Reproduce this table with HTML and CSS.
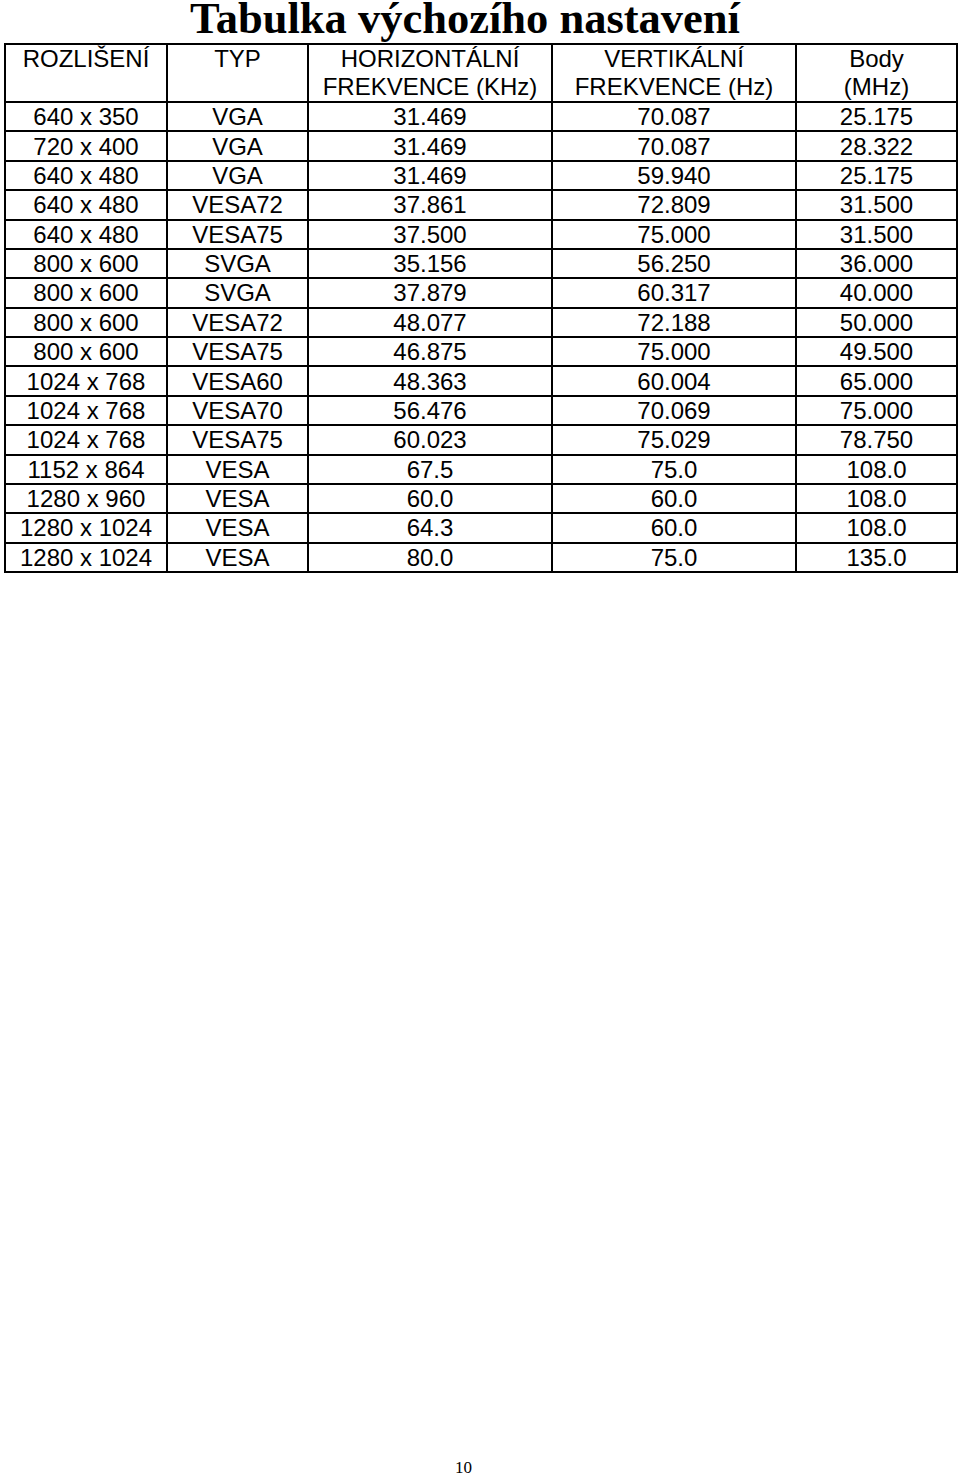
FILE: index.html
```html
<!DOCTYPE html>
<html lang="cs">
<head>
<meta charset="utf-8">
<title>Tabulka výchozího nastavení</title>
<link rel="stylesheet" href="styles.css">
</head>
<body>
<div class="page">
  <h1 class="title">Tabulka výchozího nastavení</h1>
  <table class="modes">
    <colgroup>
      <col class="c1"><col class="c2"><col class="c3"><col class="c4"><col class="c5">
    </colgroup>
    <thead>
      <tr>
        <th>ROZLIŠENÍ</th>
        <th>TYP</th>
        <th>HORIZONTÁLNÍ<br>FREKVENCE (KHz)</th>
        <th>VERTIKÁLNÍ<br>FREKVENCE (Hz)</th>
        <th>Body<br>(MHz)</th>
      </tr>
    </thead>
    <tbody>
      <tr><td>640 x 350</td><td>VGA</td><td>31.469</td><td>70.087</td><td>25.175</td></tr>
      <tr><td>720 x 400</td><td>VGA</td><td>31.469</td><td>70.087</td><td>28.322</td></tr>
      <tr><td>640 x 480</td><td>VGA</td><td>31.469</td><td>59.940</td><td>25.175</td></tr>
      <tr><td>640 x 480</td><td>VESA72</td><td>37.861</td><td>72.809</td><td>31.500</td></tr>
      <tr><td>640 x 480</td><td>VESA75</td><td>37.500</td><td>75.000</td><td>31.500</td></tr>
      <tr><td>800 x 600</td><td>SVGA</td><td>35.156</td><td>56.250</td><td>36.000</td></tr>
      <tr><td>800 x 600</td><td>SVGA</td><td>37.879</td><td>60.317</td><td>40.000</td></tr>
      <tr><td>800 x 600</td><td>VESA72</td><td>48.077</td><td>72.188</td><td>50.000</td></tr>
      <tr><td>800 x 600</td><td>VESA75</td><td>46.875</td><td>75.000</td><td>49.500</td></tr>
      <tr><td>1024 x 768</td><td>VESA60</td><td>48.363</td><td>60.004</td><td>65.000</td></tr>
      <tr><td>1024 x 768</td><td>VESA70</td><td>56.476</td><td>70.069</td><td>75.000</td></tr>
      <tr><td>1024 x 768</td><td>VESA75</td><td>60.023</td><td>75.029</td><td>78.750</td></tr>
      <tr><td>1152 x 864</td><td>VESA</td><td>67.5</td><td>75.0</td><td>108.0</td></tr>
      <tr><td>1280 x 960</td><td>VESA</td><td>60.0</td><td>60.0</td><td>108.0</td></tr>
      <tr><td>1280 x 1024</td><td>VESA</td><td>64.3</td><td>60.0</td><td>108.0</td></tr>
      <tr><td>1280 x 1024</td><td>VESA</td><td>80.0</td><td>75.0</td><td>135.0</td></tr>
    </tbody>
  </table>
  <div class="page-number">10</div>
</div>
</body>
</html>
```
FILE: styles.css
```css
html, body {
  margin: 0;
  padding: 0;
  background: #fff;
  color: #000;
}

.page {
  width: 960px;
  height: 1477px;
  display: flex;
  flex-direction: column;
  box-sizing: border-box;
}

.title {
  margin: 0;
  height: 43px;
  padding-top: 1px;
  box-sizing: border-box;
  padding-right: 30px;
  font-family: "Liberation Serif", "Times New Roman", serif;
  font-weight: bold;
  font-size: 44.5px;
  line-height: 35px;
  text-align: center;
  white-space: nowrap;
}

.modes {
  margin-left: 4px;
  width: 954px;
  table-layout: fixed;
  border-collapse: separate;
  border-spacing: 0;
  border-top: 2px solid #000;
  border-left: 2px solid #000;
  font-family: "Liberation Sans", Arial, sans-serif;
  font-size: 24px;
}

.c1 { width: 162px; }
.c2 { width: 141px; }
.c3 { width: 244px; }
.c4 { width: 244px; }
.c5 { width: 161px; }

.modes th,
.modes td {
  box-sizing: border-box;
  padding: 0;
  border-right: 2px solid #000;
  border-bottom: 2px solid #000;
  text-align: center;
  white-space: nowrap;
}

.modes th {
  font-weight: normal;
  height: 58px;
  line-height: 28px;
  vertical-align: top;
}

.modes td {
  height: 29.375px;
  line-height: 27px;
  vertical-align: middle;
}

.page-number {
  margin-top: auto;
  padding-right: 33px;
  padding-bottom: 1px;
  font-family: "Liberation Serif", "Times New Roman", serif;
  font-size: 17px;
  line-height: 17px;
  text-align: center;
}
```
